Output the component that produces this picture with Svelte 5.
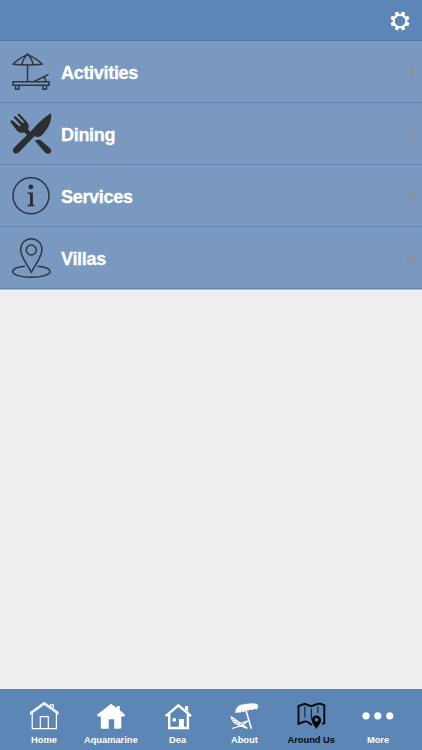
<script>
  const rows = ["Activities", "Dining", "Services", "Villas"];
  const tabs = ["Home", "Aquamarine", "Dea", "About", "Around Us", "More"];
  const teeth = [0, 45, 90, 135, 180, 225, 270, 315];

  let active = $state("Around Us");
</script>

<div class="app">
  <header>
    <button class="settings" aria-label="Settings">
      <svg width="20" height="20" viewBox="0 0 20 20">
        <circle cx="10" cy="10" r="6.3" fill="none" stroke="#fff" stroke-width="2.1" />
        {#each teeth as angle}
          <path d="M8.1 4 8.3.4h3.400l.2 3.600z" fill="#fff" transform="rotate({angle + 22.5} 10 10)" />
        {/each}
      </svg>
    </button>
  </header>

  <main>
    {#each rows as row}
      <div class="row">
        <svg class="icon" viewBox="0 0 42 42">
          {#if row === "Activities"}
            <g class="line">
              <path d="M17.500 2v2M2.900 13.200C6.500 9 12 6 17.500 3.300 23 6 28.600 9 32.300 13.200Q17.500 14.600 2.900 13.200zM17.500 3.300Q12.800 8 11.900 13.700M17.500 3.300Q22.200 8 23.100 13.700M17.500 13.800V30" />
              <path d="M2.900 30.800h36.200v3.500H2.900zM5.500 34.300v4h3.600v-4M32.900 34.300v4h3.600v-4M24.300 30.500l14.300-7.200M34.500 25.500l1.400 5" />
            </g>
          {:else if row === "Dining"}
            <path d="M41 .3c.9 5.700-1.400 12.500-5.400 17.400-2.700 3.500-5.300 6.700-8 6.300l-3.200-.8L8.700 39.500c-3.300 3.100-7.800-1.200-4.900-4.600L21.600 17.600C27.500 11.200 34.500 3.500 41 .3z" />
            <path d="M.5 8.900c-.4-1.300.9-2.200 2-1.400l7.100 5.900 1.200-1.200-6.700-7.100c-.9-1.200.7-2.400 1.800-1.500l7 6.600 1.200-1.200-6.300-6.600c-.8-1.300.7-2.400 1.800-1.300l7.600 8.200c1.700 2.100 2 4.500.8 7l3 3.300-3.300 3.200-3.300-3.400c-2.900.9-5.400.3-7.300-1.700z" />
            <path d="M24.800 27.700c2-.8 3.800-1.400 5.700-.6l9.800 8.400c2.800 3.600-1.500 7.200-5 4.200z" />
          {:else if row === "Services"}
            <circle class="line" cx="21" cy="20.700" r="18" />
            <circle cx="20.900" cy="11.900" r="2.400" />
            <path d="M17.600 17.500h5.300v12.200h1.300v1.500h-6.600v-1.500h2.400V19h-2.400z" />
          {:else}
            <g class="line">
              <path d="M21.300 35.500C18.500 29 10.700 20.500 10.700 12.700c0-14.700 21.200-14.700 21.200 0 0 7.800-7.800 16.300-10.600 22.800z" />
              <circle cx="21.300" cy="13" r="5" />
              <path d="M15 29.300C7 30 2.700 32 2.700 34.600c0 3.200 8 5.700 18.500 5.700s18.900-2.500 18.900-5.700c0-2.600-4.700-4.600-12.700-5.300" />
            </g>
          {/if}
        </svg>
        <span class="title">{row}</span>
        <svg class="chevron" width="10" height="14" viewBox="0 0 10 14">
          <path d="M1.600 1.300 7.300 7l-5.700 5.700" />
        </svg>
      </div>
    {/each}
  </main>

  <nav>
    {#each tabs as tab}
      <button class="tab" class:active={active === tab} onclick={() => (active = tab)}>
        <svg viewBox="0 0 34 34">
          {#if tab === "Home"}
            <path class="thin" d="M5.200 14v15.600h24.200V14M3.600 14.900v-1.700L17.200 3.500l13.700 9.700v1.700L17.200 5.200zM23.500 7.700V5.800h2.800v4M13.300 29.600V17.700h8v11.900" />
          {:else if tab === "Aquamarine"}
            <path d="M17 4.700 22.800 9V7h3v4.200l5 4.300v1.300l-.8.700h-2.700v10.800c0 1-.6 1.500-1.600 1.500h-5.500v-9.500h-5.500v9.500H8.400c-1 0-1.600-.5-1.600-1.500V17.500H4.100l-.8-.7v-1.300z" />
          {:else if tab === "Dea"}
            <path class="thick" d="M4.700 17.200 17.400 6.400l12.700 10.800M8.200 15v14h18.700V15" />
            <path d="M17.900 20.100h5v9.600h-5zM11.600 19.200h3.300v3.300h-3.300zM23.900 6.900h3.300v6l-3.300-3z" />
          {:else if tab === "About"}
            <path d="M8.400 14.300C7.800 8.800 12.200 5 17.900 5.300l.6-1.100 1.100.8c4.500-1.200 9.400-1.200 11.700 1.500-.1 1.700-.7 3.100-1.700 4.200-1.300-.9-2.700-.8-3.800.4-1.600-.9-3.300-.7-4.500.7-1.500-.9-3.300-.3-4.400 1.200-1.300-1-2.800-.5-3.700.9-1.600-.7-3.400-.6-4.800.4z" />
            <path class="pole" d="M19 11.500 24.300 29.700" />
            <path class="thin" d="M3.900 17.500Q6 24.500 12.500 26.200L20 29.500M3.900 17.500l9.900 7 6.700 4.800M20.800 21.700l-5.100 4.500L5 29.500M20.800 21.700l-7.500 2.800M7.400 20.400l2.400 4.700M10 22l2.700 4" />
          {:else if tab === "Around Us"}
            <path class="map" d="M17.800 26c-2.300-1.400-4.300-4.500-7.200-3.500l-6.100 2.300V7l6.200-2.200 6.600 2.400 6.700-2.400h2.800l3.500 1.600v17.800l-2.200.8" />
            <path class="fold" d="M10.900 7.500v11M17.300 9.500v11M23.900 7.500v6.500" />
            <path fill-rule="evenodd" d="M22.400 30.500c-1-3.200-4.700-5.400-4.700-9.200 0-6.500 9.400-6.500 9.400 0 0 3.800-3.700 6-4.700 9.200zm0-11.500a1.700 1.700 0 100 3.400 1.700 1.700 0 000-3.400z" />
          {:else}
            <circle cx="5" cy="16.800" r="3.600" />
            <circle cx="16.800" cy="16.800" r="3.600" />
            <circle cx="28.700" cy="16.800" r="3.600" />
          {/if}
        </svg>
        <span>{tab}</span>
      </button>
    {/each}
  </nav>
</div>

<style>
  :global(body) {
    margin: 0;
  }
  .app {
    display: flex;
    flex-direction: column;
    height: 750px;
    background: #eee;
    font-family: "Liberation Sans", Arial, sans-serif;
    font-weight: bold;
    color: #fff;
  }
  button {
    border: 0;
    padding: 0;
    background: none;
    color: inherit;
    font: inherit;
    cursor: pointer;
  }
  header {
    box-sizing: border-box;
    height: 41px;
    display: flex;
    align-items: center;
    justify-content: flex-end;
    padding: 1px 12px 0 0;
    background: #5c86b5;
    border-bottom: 1px solid #5079a8;
  }
  .settings,
  .settings svg {
    display: block;
  }
  main {
    flex: 1;
  }
  .row {
    box-sizing: border-box;
    height: 62px;
    display: flex;
    align-items: center;
    padding: 0 6px 0 10px;
    background: #7999c0;
    border-bottom: 1px solid #6085b3;
  }
  .row:last-child {
    box-shadow: 0 1px #a9c0dc;
  }
  .icon {
    width: 42px;
    height: 42px;
    fill: #2d2e30;
    overflow: visible;
  }
  .line {
    fill: none;
    stroke: #30363e;
    stroke-width: 1.5;
    stroke-linejoin: round;
  }
  .title {
    flex: 1;
    padding: 4px 0 0 9px;
    font-size: 18px;
    letter-spacing: -0.3px;
    -webkit-text-stroke: 0.3px #fff;
  }
  .chevron {
    fill: none;
    stroke: #8d9199;
    stroke-width: 3;
  }
  nav {
    box-sizing: border-box;
    height: 61px;
    display: grid;
    grid-template-columns: repeat(6, 1fr);
    padding: 9px 10.6px 0;
    background: #5c86b5;
    border-top: 1px solid #5c81a8;
  }
  .tab {
    display: flex;
    flex-direction: column;
    align-items: center;
    font-size: 9.3px;
    line-height: 12px;
    white-space: nowrap;
  }
  .tab svg {
    width: 34px;
    height: 34px;
    margin-bottom: 1px;
    fill: currentColor;
  }
  .tab.active {
    color: #05090e;
  }
  .thin,
  .thick,
  .pole,
  .map,
  .fold {
    fill: none;
    stroke: currentColor;
    stroke-width: 1.2;
  }
  .thick {
    stroke-width: 2.4;
  }
  .pole {
    stroke-width: 1.6;
  }
  .map {
    stroke-width: 1.9;
  }
  .fold {
    stroke-width: 0.9;
  }
</style>
